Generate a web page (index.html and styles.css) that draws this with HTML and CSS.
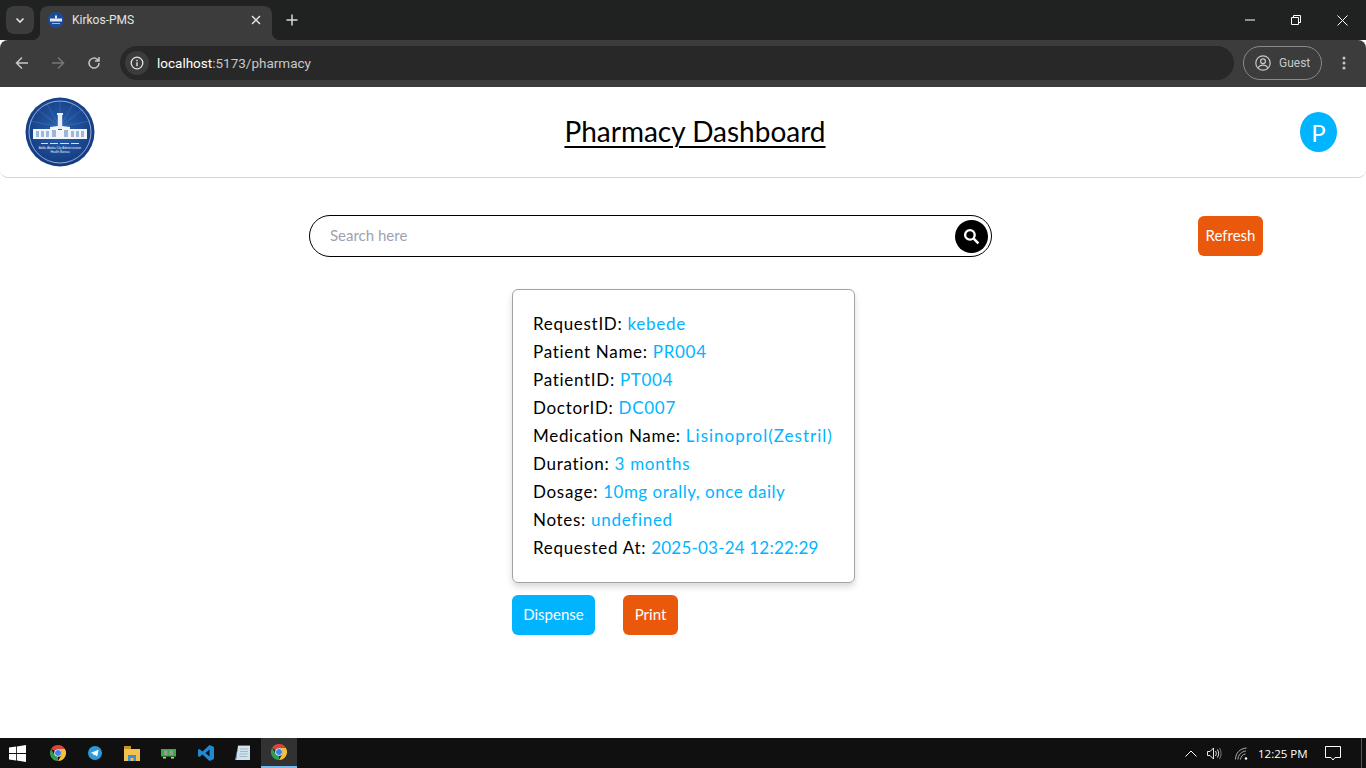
FILE: index.html
```html
<!DOCTYPE html>
<html lang="en">
<head>
  <meta charset="UTF-8" />
  <meta name="viewport" content="width=device-width, initial-scale=1.0" />
  <title>Kirkos-PMS</title>
  <link rel="stylesheet" href="styles.css">
</head>
<body>
  <svg class="icon-defs" width="0" height="0">
    <symbol id="chrome" viewBox="0 0 16 16">
      <path d="M1.070 4A8 8 0 0 1 14.930 4H8A4 4 0 0 0 4.540 6z" fill="#db4437"/>
      <path d="M14.930 4A8 8 0 0 1 8 16L11.460 10A4 4 0 0 0 8 4z" fill="#fbc02d"/>
      <path d="M8 16A8 8 0 0 1 1.070 4L4.540 10A4 4 0 0 0 8 12z" fill="#2f9e52"/>
      <circle cx="8" cy="8" r="3.800" fill="#fff"/>
      <circle cx="8" cy="8" r="3" fill="#3f83ea"/>
    </symbol>
  </svg>

  <div class="tabstrip">
    <div class="tab-menu">
      <svg width="12" height="12" viewBox="0 0 12 12"><path d="M2.500 4.500 6 8l3.500-3.500" fill="none" stroke="#e3e3e3" stroke-width="1.600"/></svg>
    </div>
    <div class="tab">
      <svg class="tab-icon" width="16" height="16" viewBox="0 0 16 16">
        <circle cx="8" cy="8" r="8" fill="#1c4a94"/>
        <rect x="2" y="6.500" width="12" height="3" fill="#dfe8f5"/>
        <rect x="7" y="3.500" width="2" height="3" fill="#dfe8f5"/>
        <rect x="4" y="11" width="8" height="1" fill="#9db7da"/>
      </svg>
      <span class="tab-title">Kirkos-PMS</span>
      <svg class="tab-close" width="10" height="10" viewBox="0 0 10 10"><path d="M1 1l8 8M9 1l-8 8" stroke="#e3e3e3" stroke-width="1.500"/></svg>
    </div>
    <svg class="new-tab" width="12" height="12" viewBox="0 0 12 12"><path d="M6 .5v11M.5 6h11" stroke="#d8d8d8" stroke-width="1.500"/></svg>
    <div class="window-btns">
      <svg width="10" height="10" viewBox="0 0 10 10"><path d="M0 5h10" stroke="#fff"/></svg>
      <svg width="10" height="10" viewBox="0 0 10 10"><path d="M.5 2.500h7v7h-7zM2.500 2.500v-2h7v7h-2" fill="none" stroke="#fff"/></svg>
      <svg width="11" height="11" viewBox="0 0 11 11"><path d="M.5.5l10 10M10.500.5l-10 10" stroke="#fff"/></svg>
    </div>
  </div>

  <div class="toolbar">
    <svg class="nav-icon" width="14" height="14" viewBox="0 0 14 14"><path d="M13 7H2M7 1.500 1.500 7 7 12.500" fill="none" stroke="#c7c7c7" stroke-width="1.500"/></svg>
    <svg class="nav-icon" width="14" height="14" viewBox="0 0 14 14"><path d="M1 7h11M7 1.500 12.500 7 7 12.500" fill="none" stroke="#777" stroke-width="1.500"/></svg>
    <svg class="nav-icon" width="14" height="14" viewBox="0 0 14 14"><path d="M12 7a5 5 0 1 1-1.500-3.500L12 5M12 1v4H8" fill="none" stroke="#c7c7c7" stroke-width="1.500"/></svg>
    <div class="omnibox">
      <div class="site-info">
        <svg width="14" height="14" viewBox="0 0 14 14"><circle cx="7" cy="7" r="5.800" fill="none" stroke="#e3e3e3" stroke-width="1.300"/><path d="M7 6.200v4M7 3.800v1.400" stroke="#e3e3e3" stroke-width="1.400"/></svg>
      </div>
      <span class="url"><span class="url-host">localhost</span>:5173/pharmacy</span>
    </div>
    <div class="guest">
      <svg width="16" height="16" viewBox="0 0 16 16"><circle cx="8" cy="8" r="7.200" fill="none" stroke="#c7c7c7" stroke-width="1.200"/><circle cx="8" cy="6.300" r="2.400" fill="none" stroke="#c7c7c7" stroke-width="1.200"/><path d="M3.200 12.800c1-2 3-2.600 4.800-2.600s3.800.6 4.800 2.600" fill="none" stroke="#c7c7c7" stroke-width="1.200"/></svg>
      <span>Guest</span>
    </div>
    <svg class="kebab" width="4" height="14" viewBox="0 0 4 14"><circle cx="2" cy="2" r="1.500" fill="#c7c7c7"/><circle cx="2" cy="7" r="1.500" fill="#c7c7c7"/><circle cx="2" cy="12" r="1.500" fill="#c7c7c7"/></svg>
  </div>

  <div class="page">
    <header class="app-header">
      <svg class="logo" width="70" height="70" viewBox="0 0 70 70">
        <defs>
          <radialGradient id="logoBg" cx="50%" cy="45%" r="55%">
            <stop offset="0" stop-color="#2a63ad"/>
            <stop offset="1" stop-color="#123a82"/>
          </radialGradient>
        </defs>
        <circle cx="35" cy="35" r="34.500" fill="url(#logoBg)"/>
        <path d="M35 30 12 12M35 30 22 7M35 30 48 7M35 30 58 12M35 30 5 24M35 30 65 24M35 30V5" stroke="#5f8cc6" stroke-width=".6" opacity=".6"/>
        <circle cx="35" cy="35" r="31" fill="none" stroke="#cfdcef" stroke-width=".7"/>
        <path d="M32 16h6v2h-.8v14h-4.400V18H32z" fill="#e8eef7"/>
        <path d="M8 32h17v-2l8-1v4h4v-4l8 1v2h17v10H8z" fill="#f2f5fa"/>
        <path d="M11 34h3v6h-3zM16 34h3v6h-3zM21 34h3v6h-3zM27 33h4v7h-4zM39 33h4v7h-4zM46 34h3v6h-3zM51 34h3v6h-3zM56 34h3v6h-3z" fill="#9db7da"/>
        <path d="M16 46.500h7M25 46.500h8M35 46.500h9M46 46.500h8" stroke="#d5e0f0" stroke-width="1.200"/>
        <text class="logo-text" x="35" y="51.500">Addis Ababa City Administration</text>
        <text class="logo-text" x="35" y="55.500">Health Bureau</text>
      </svg>
      <h1 class="app-title">Pharmacy Dashboard</h1>
      <div class="avatar">P</div>
    </header>

    <div class="search-row">
      <div class="search-box">
        <span class="search-placeholder">Search here</span>
        <div class="search-btn">
          <svg width="17" height="17" viewBox="0 0 16 16"><circle cx="6.500" cy="6.500" r="4.500" fill="none" stroke="#fff" stroke-width="2.200"/><path d="M10 10l4.500 4.500" stroke="#fff" stroke-width="2.400"/></svg>
        </div>
      </div>
      <button class="btn btn-orange btn-refresh">Refresh</button>
    </div>

    <section class="request">
      <div class="card">
        <p class="line">RequestID: <span class="value">kebede</span></p>
        <p class="line">Patient Name: <span class="value">PR004</span></p>
        <p class="line">PatientID: <span class="value">PT004</span></p>
        <p class="line">DoctorID: <span class="value">DC007</span></p>
        <p class="line">Medication Name: <span class="value value-wide">Lisinoprol(Zestril)</span></p>
        <p class="line">Duration: <span class="value">3 months</span></p>
        <p class="line">Dosage: <span class="value value-dose">10mg orally, once daily</span></p>
        <p class="line">Notes: <span class="value">undefined</span></p>
        <p class="line">Requested At: <span class="value value-date">2025-03-24 12:22:29</span></p>
      </div>
      <div class="actions">
        <button class="btn btn-blue">Dispense</button>
        <button class="btn btn-orange">Print</button>
      </div>
    </section>
  </div>

  <footer class="taskbar">
    <div class="task-start">
      <svg width="17" height="17" viewBox="0 0 17 17"><path d="M0 2.500 7.200 1.500v6.500H0zM8 1.400 17 0v8H8zM0 9h7.200v6.500L0 14.500zM8 9h9v8l-9-1.400z" fill="#fff"/></svg>
    </div>
    <div class="task-item">
      <svg width="16" height="16"><use href="#chrome"/></svg>
    </div>
    <div class="task-item">
      <svg width="16" height="16" viewBox="0 0 16 16"><circle cx="8" cy="8" r="7" fill="#2a9bd8"/><path d="M3.500 8 11.500 4.800 10.300 11.500 7.800 9.700 6.700 10.800 6.400 8.800z" fill="#fff"/></svg>
    </div>
    <div class="task-item">
      <svg width="16" height="15" viewBox="0 0 16 15"><path d="M0 1h6l1 2h9v12H0z" fill="#f4c04e"/><rect x="0" y="0" width="7" height="3" fill="#c8922c"/><path d="M4 15v-6h8v6h-2.500v-3h-3v3z" fill="#3b8fd6"/></svg>
    </div>
    <div class="task-item">
      <svg width="15" height="11" viewBox="0 0 15 11"><rect y="1" width="15" height="7.500" fill="#2fb344"/><rect x="3" y="2.500" width="3.500" height="4.500" fill="#9a9a8a"/><rect x="8.500" y="2.500" width="3.500" height="4.500" fill="#9a9a8a"/><path d="M2 9h3v1.500H2zM10 9h3v1.500h-3z" fill="#e6d93a"/></svg>
    </div>
    <div class="task-item">
      <svg width="16" height="16" viewBox="0 0 16 16"><path d="M11.500 0 16 2v12l-4.500 2L4.500 9.500 1.500 12 0 11V5l1.500-1 3 2.500zM11.500 4.500 7.500 8l4 3.500z" fill="#1f8ad2"/></svg>
    </div>
    <div class="task-item">
      <svg width="15" height="16" viewBox="0 0 15 16"><path d="M3 1h12v14H1z" fill="#cfe3ee"/><path d="M3 1 1 15H0z" fill="#6fa6c4"/><path d="M5 4h8M5 6.500h8M4.500 9h8M4.500 11.500h8" stroke="#8fa8b5" stroke-width=".7"/><path d="M4 0v2M6 0v2M8 0v2M10 0v2M12 0v2M14 0v2" stroke="#e8e8e8" stroke-width=".8"/></svg>
    </div>
    <div class="task-item task-active">
      <svg width="16" height="16"><use href="#chrome"/></svg>
    </div>
    <div class="tray">
      <svg class="tray-up" width="12" height="7" viewBox="0 0 12 7"><path d="M.5 6.500 6 1l5.500 5.500" fill="none" stroke="#fff"/></svg>
      <svg class="tray-sound" width="16" height="13" viewBox="0 0 16 13"><path d="M.5 4.500h2.500L6.500 1v11L3 8.500H.5zM8.500 4c1 1.500 1 3.500 0 5M10.500 2.500c1.500 2.500 1.500 5.500 0 8" fill="none" stroke="#fff" stroke-width=".9"/><path d="M12.500 1c2 3 2 8 0 11" fill="none" stroke="#888" stroke-width=".9"/></svg>
      <svg class="tray-wifi" width="13" height="13" viewBox="0 0 13 13"><path d="M.5 12.500C.5 6 5 1.500 11.500 1M3 12.500C3 8 6.500 4.500 11 4M5.500 12.500C5.500 10 8 7 10.500 7" fill="none" stroke="#bbb" stroke-width=".9"/><circle cx="11" cy="11.500" r="1.200" fill="#fff"/></svg>
      <span class="clock">12:25 PM</span>
      <svg class="notify" width="16" height="15" viewBox="0 0 16 15"><path d="M.5.500h15v11h-5.500L8 14l-2-2.500H.5z" fill="none" stroke="#fff"/></svg>
      <div class="show-desktop"></div>
    </div>
  </footer>
</body>
</html>
```

FILE: styles.css
```css
html, body {
  margin: 0;
  height: 100%;
}
body {
  width: 1366px;
  height: 768px;
  overflow: hidden;
  display: flex;
  flex-direction: column;
  font-family: "Lato", "Open Sans", sans-serif;
  background: #fff;
}
.icon-defs {
  position: absolute;
}

/* browser chrome */
.tabstrip {
  height: 40px;
  flex: none;
  background: #202221;
  display: flex;
  align-items: flex-start;
  font-family: "Roboto", sans-serif;
}
.tab-menu {
  width: 28px;
  height: 28px;
  margin: 6px 0 0 6px;
  background: #3c3c3c;
  border-radius: 8px;
  display: flex;
  align-items: center;
  justify-content: center;
}
.tab {
  position: relative;
  width: 232px;
  height: 34px;
  margin: 6px 0 0 6px;
  padding: 0 11px 6px 8px;
  box-sizing: border-box;
  background: #3c3c3c;
  border-radius: 8px 8px 0 0;
  display: flex;
  align-items: center;
  color: #e3e3e3;
  font-size: 12px;
}
.tab::before,
.tab::after {
  content: "";
  position: absolute;
  bottom: 0;
  width: 8px;
  height: 8px;
}
.tab::before {
  left: -8px;
  background: radial-gradient(circle at 0 0, transparent 8px, #3c3c3c 8.5px);
}
.tab::after {
  right: -8px;
  background: radial-gradient(circle at 100% 0, transparent 8px, #3c3c3c 8.5px);
}
.tab-title {
  margin-left: 8px;
  flex: 1;
}
.new-tab {
  margin: 14px 0 0 14px;
}
.window-btns {
  margin-left: auto;
  display: flex;
  align-items: center;
  height: 40px;
  gap: 36px;
  padding-right: 18px;
}
.toolbar {
  height: 47px;
  flex: none;
  background: #3c3c3c;
  border-radius: 8px 8px 0 0;
  display: flex;
  align-items: center;
  box-sizing: border-box;
  padding: 0 0 1px 15px;
  font-family: "Roboto", sans-serif;
}
.nav-icon {
  margin-right: 22px;
}
.omnibox {
  width: 1114px;
  height: 34px;
  margin-left: -3px;
  background: #282828;
  border-radius: 17px;
  display: flex;
  align-items: center;
  padding-left: 5px;
  box-sizing: border-box;
}
.site-info {
  width: 24px;
  height: 24px;
  border-radius: 50%;
  background: #3c3c3c;
  display: flex;
  align-items: center;
  justify-content: center;
}
.url {
  margin-left: 8px;
  font-size: 13.5px;
  color: #c7c7c7;
}
.url-host {
  color: #fff;
}
.guest {
  width: 79px;
  height: 34px;
  margin-left: 9px;
  box-sizing: border-box;
  border: 1px solid #8a8a8a;
  border-radius: 17px;
  display: flex;
  align-items: center;
  gap: 8px;
  padding-left: 11px;
  color: #c7c7c7;
  font-size: 12px;
}
.kebab {
  margin-left: 20px;
}

/* app */
.page {
  flex: 1;
  min-height: 0;
  background: #fff;
}
.app-header {
  height: 91px;
  box-sizing: border-box;
  padding: 0 29px 0 25px;
  border-bottom: 1px solid #d5d5d5;
  border-radius: 0 0 8px 8px;
  display: flex;
  align-items: center;
  justify-content: space-between;
}
.logo-text {
  font-family: "Liberation Sans", sans-serif;
  font-size: 3px;
  fill: #e8eef7;
  text-anchor: middle;
}
.app-title {
  margin: 0 0 2px -5px;
  font-size: 28px;
  font-weight: 400;
  color: #000;
  text-decoration: underline;
  text-decoration-thickness: 2px;
  text-underline-offset: 4px;
}
.avatar {
  width: 37px;
  height: 40px;
  border-radius: 50%;
  background: #00b4ff;
  color: #fff;
  font-size: 24px;
  display: flex;
  align-items: center;
  justify-content: center;
}
.search-row {
  display: flex;
  align-items: center;
  margin: 37px 0 0 309px;
}
.search-box {
  width: 683px;
  height: 42px;
  box-sizing: border-box;
  border: 1px solid #000;
  border-radius: 21px;
  display: flex;
  align-items: center;
  justify-content: space-between;
  padding: 0 3px 0 20px;
}
.search-placeholder {
  font-size: 15px;
  color: #9ca3af;
  margin-bottom: 2px;
}
.search-btn {
  width: 33px;
  height: 33px;
  border-radius: 50%;
  background: #000;
  display: flex;
  align-items: center;
  justify-content: center;
}
.btn {
  height: 40px;
  border: none;
  border-radius: 6px;
  color: #fff;
  font-family: inherit;
  font-size: 15px;
  padding: 0 0 2px;
}
.btn-orange {
  background: #ea580c;
}
.btn-blue {
  background: #00b4ff;
  width: 83px;
}
.btn-refresh {
  width: 65px;
  margin-left: 206px;
}
.request {
  margin: 32px 0 0 512px;
}
.card {
  width: 343px;
  height: 294px;
  box-sizing: border-box;
  padding: 20px;
  border: 1px solid #a3a3a3;
  border-radius: 6px;
  box-shadow: 0 4px 6px rgba(0, 0, 0, 0.15);
}
.line {
  margin: 0;
  height: 28px;
  line-height: 28px;
  font-size: 17px;
  letter-spacing: 0.7px;
  color: #000;
  white-space: nowrap;
}
.value {
  color: #00b4ff;
}
.value-wide {
  letter-spacing: 1px;
}
.value-dose {
  letter-spacing: 0.5px;
}
.value-date {
  letter-spacing: 0.2px;
}
.actions {
  display: flex;
  gap: 28px;
  margin-top: 12px;
}
.actions .btn-orange {
  width: 55px;
}

/* windows taskbar */
.taskbar {
  height: 30px;
  flex: none;
  background: #101010;
  display: flex;
  align-items: center;
}
.task-start {
  width: 35px;
  margin-right: 4px;
  display: flex;
  justify-content: center;
}
.task-item {
  width: 37px;
  height: 30px;
  box-sizing: border-box;
  display: flex;
  align-items: center;
  justify-content: center;
}
.task-active {
  width: 36px;
  background: #323232;
  border-bottom: 2px solid #76b9ed;
}
.tray {
  margin-left: auto;
  display: flex;
  align-items: center;
  height: 30px;
}
.tray-up {
  margin-right: 10px;
}
.tray-sound {
  margin-right: 12px;
}
.tray-wifi {
  margin-right: 10px;
}
.clock {
  width: 48px;
  margin-right: 19px;
  font-family: "Open Sans", sans-serif;
  font-size: 11.5px;
  color: #fff;
  white-space: nowrap;
}
.notify {
  margin-right: 20px;
}
.show-desktop {
  width: 1px;
  height: 30px;
  background: #555;
  margin-right: 4px;
}
```
